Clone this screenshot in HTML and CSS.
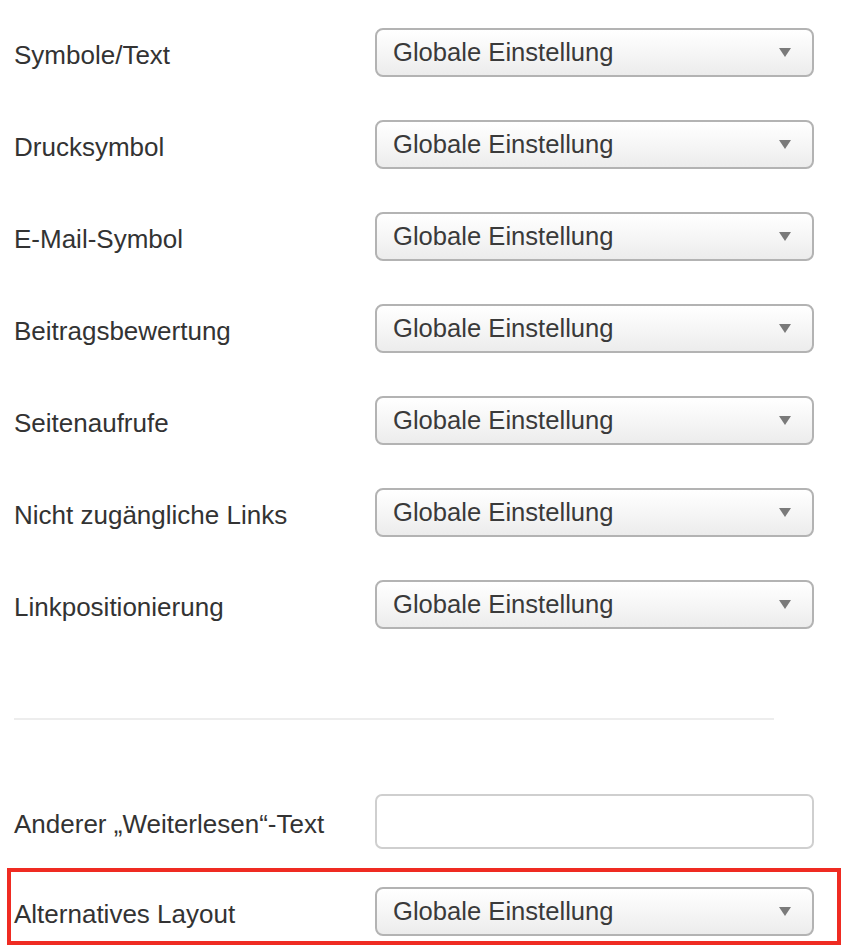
FILE: index.html
```html
<!DOCTYPE html>
<html lang="de">
<head>
<meta charset="utf-8">
<title>Optionen</title>
<link rel="stylesheet" href="styles.css">
</head>
<body>
<div class="form">
  <div class="row"><label class="lbl">Symbole/Text</label><div class="sel"><span>Globale Einstellung</span><svg class="caret" width="12" height="9" viewBox="0 0 12 9"><path d="M0 0H12L6 9Z"/></svg></div></div>
  <div class="row"><label class="lbl">Drucksymbol</label><div class="sel"><span>Globale Einstellung</span><svg class="caret" width="12" height="9" viewBox="0 0 12 9"><path d="M0 0H12L6 9Z"/></svg></div></div>
  <div class="row"><label class="lbl">E-Mail-Symbol</label><div class="sel"><span>Globale Einstellung</span><svg class="caret" width="12" height="9" viewBox="0 0 12 9"><path d="M0 0H12L6 9Z"/></svg></div></div>
  <div class="row"><label class="lbl">Beitragsbewertung</label><div class="sel"><span>Globale Einstellung</span><svg class="caret" width="12" height="9" viewBox="0 0 12 9"><path d="M0 0H12L6 9Z"/></svg></div></div>
  <div class="row"><label class="lbl">Seitenaufrufe</label><div class="sel"><span>Globale Einstellung</span><svg class="caret" width="12" height="9" viewBox="0 0 12 9"><path d="M0 0H12L6 9Z"/></svg></div></div>
  <div class="row"><label class="lbl">Nicht zugängliche Links</label><div class="sel"><span>Globale Einstellung</span><svg class="caret" width="12" height="9" viewBox="0 0 12 9"><path d="M0 0H12L6 9Z"/></svg></div></div>
  <div class="row"><label class="lbl">Linkpositionierung</label><div class="sel"><span>Globale Einstellung</span><svg class="caret" width="12" height="9" viewBox="0 0 12 9"><path d="M0 0H12L6 9Z"/></svg></div></div>

  <hr class="sep">

  <div class="row row-input"><label class="lbl">Anderer „Weiterlesen“-Text</label><div class="inp"></div></div>

  <div class="highlight">
    <div class="row row-last"><label class="lbl">Alternatives Layout</label><div class="sel"><span>Globale Einstellung</span><svg class="caret" width="12" height="9" viewBox="0 0 12 9"><path d="M0 0H12L6 9Z"/></svg></div></div>
  </div>
</div>
</body>
</html>
```

FILE: styles.css
```css
html, body {
  margin: 0;
  padding: 0;
  background: #ffffff;
}

body {
  font-family: "Liberation Sans", Arial, sans-serif;
  color: #333333;
}

.form {
  padding: 28px 0 0 14px;
}

.row {
  display: grid;
  grid-template-columns: 361px 439px;
  align-items: center;
  margin-bottom: 43px;
}

.lbl {
  font-size: 26px;
  color: #333333;
  padding-top: 6px;
}

.sel {
  box-sizing: border-box;
  height: 49px;
  border: 2px solid #b3b3b3;
  border-radius: 8px;
  background: linear-gradient(#ffffff 0%, #f7f7f7 45%, #ececec 100%);
  display: flex;
  align-items: center;
  justify-content: space-between;
  padding: 0 21px 0 16px;
  font-size: 25.6px;
  color: #3a3a3a;
}

.caret {
  fill: #7a7a7a;
  display: block;
}

.sep {
  border: 0;
  height: 2px;
  background: #ededed;
  width: 760px;
  margin: 89px 0 74px 0;
}

.inp {
  box-sizing: border-box;
  height: 55px;
  border: 2px solid #cfcfcf;
  border-radius: 7px;
  background: #ffffff;
}

.row-input {
  margin-bottom: 19px;
}

.highlight {
  box-sizing: border-box;
  width: 834px;
  margin-left: -7px;
  border: 4px solid #ef2b22;
  padding: 15px 0 5px 3px;
}

.row-last {
  margin-bottom: 0;
}
```
